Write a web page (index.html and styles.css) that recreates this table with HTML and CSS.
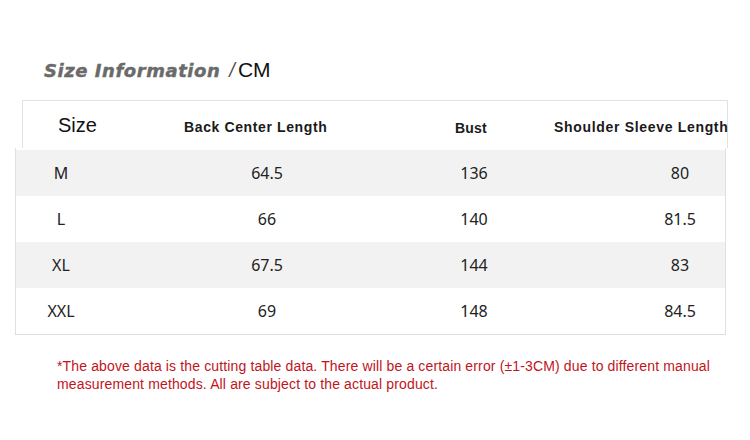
FILE: index.html
```html
<!DOCTYPE html>
<html>
<head>
<meta charset="utf-8">
<link rel="stylesheet" href="styles.css">
</head>
<body>
<div class="page">
  <h1 class="title"><span class="title-main">Size Information</span><span class="slash">/</span><span class="unit">CM</span></h1>
  <div class="table">
    <div class="head">
      <div class="h-size">Size</div>
      <div class="h-back">Back Center Length</div>
      <div class="h-bust">Bust</div>
      <div class="h-sleeve">Shoulder Sleeve Length</div>
    </div>
    <div class="body">
      <div class="row alt"><div class="c1">M</div><div class="c2">64.5</div><div class="c3">136</div><div class="c4">80</div></div>
      <div class="row"><div class="c1">L</div><div class="c2">66</div><div class="c3">140</div><div class="c4">81.5</div></div>
      <div class="row alt"><div class="c1">XL</div><div class="c2">67.5</div><div class="c3">144</div><div class="c4">83</div></div>
      <div class="row"><div class="c1">XXL</div><div class="c2">69</div><div class="c3">148</div><div class="c4">84.5</div></div>
    </div>
  </div>
  <p class="note">*The above data is the cutting table data. There will be a certain error (±1-3CM) due to different manual<br>measurement methods. All are subject to the actual product.</p>
</div>
</body>
</html>
```

FILE: styles.css
```css
html, body {
  margin: 0;
  padding: 0;
  background: #ffffff;
}
.page {
  width: 750px;
  height: 440px;
  padding-top: 58px;
  box-sizing: border-box;
}
.title {
  margin: 0 0 0 44px;
  height: 42px;
  font-family: "DejaVu Sans", "Liberation Sans", sans-serif;
  font-weight: 700;
  font-style: italic;
  font-size: 18px;
  line-height: 24px;
  color: #6a6a6a;
  display: flex;
  align-items: baseline;
}
.title-main {
  letter-spacing: 0.55px;
  -webkit-text-stroke: 0.4px #6a6a6a;
}
.slash {
  margin-left: 9px;
  font-family: "Liberation Sans", Arial, sans-serif;
  font-weight: 400;
  font-size: 20px;
  color: #555;
}
.unit {
  margin-left: 3px;
  font-family: "Liberation Sans", Arial, sans-serif;
  font-style: normal;
  font-weight: 400;
  font-size: 21px;
  color: #111;
}
.table {
  display: flex;
  flex-direction: column;
}
.head {
  margin-left: 22px;
  width: 706px;
  height: 48px;
  border: 1px solid #e2e2e2;
  border-bottom: none;
  box-sizing: border-box;
  display: grid;
  grid-template-columns: 140px 235px 100px 231px;
  align-items: center;
  font-family: "Liberation Sans", Arial, sans-serif;
  color: #111;
}
.h-size {
  padding-left: 35px;
  font-size: 20px;
  padding-top: 2px;
}
.h-back, .h-bust, .h-sleeve {
  font-size: 14px;
  font-weight: 700;
  letter-spacing: 0.62px;
  color: #1a1a1a;
  padding-top: 4px;
}
.h-back { padding-left: 21px; }
.h-bust { padding-left: 57px; padding-top: 7px; letter-spacing: 0.2px; }
.h-sleeve { padding-left: 56px; white-space: nowrap; letter-spacing: 0.68px; }
.body {
  margin-left: 15px;
  width: 711px;
  border-left: 1px solid #e0e0e0;
  border-right: 1px solid #e0e0e0;
  border-bottom: 1px solid #dcdcdc;
  box-sizing: border-box;
  padding-top: 2px;
}
.row {
  display: grid;
  grid-template-columns: 90px 322px 92px 206px;
  height: 46px;
  align-items: center;
  font-family: "Noto Sans", "Open Sans", sans-serif;
  font-size: 16px;
  color: #222;
}
.row.alt {
  background: #f2f2f2;
}
.c1, .c2, .c3 { text-align: center; }
.c4 { padding-left: 114px; text-align: center; }
.note {
  margin: 22px 0 0 57px;
  font-family: "Liberation Sans", Arial, sans-serif;
  font-size: 14px;
  letter-spacing: 0.14px;
  line-height: 18px;
  color: #c0141c;
}
```
